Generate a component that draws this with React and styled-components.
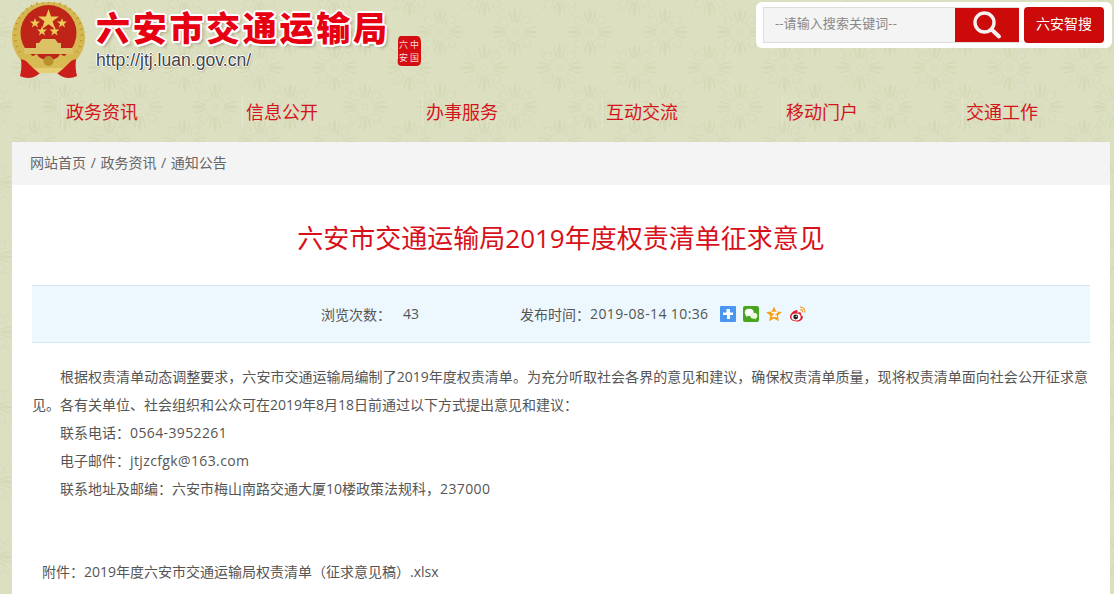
import React from "react";
import styled, { createGlobalStyle } from "styled-components";

const petals = (cx, cy, long, fill) =>
  [0, 90, 180, 270]
    .map(
      (a) =>
        `<g transform="translate(${cx} ${cy}) rotate(${a})"><path d="M0 -${long} C2.4 -${long - 5} 2.4 -${long - 10} 0 -${long - 14} C-2.4 -${long - 10} -2.4 -${long - 5} 0 -${long}Z" fill="${fill}"/><path d="M-5 -${long - 3} C-5.5 -${long - 8} -4 -${long - 11} -1.5 -${long - 14}M5 -${long - 3} C5.5 -${long - 8} 4 -${long - 11} 1.5 -${long - 14}" stroke="${fill}" stroke-width="1.5" fill="none"/></g>`
    )
    .join("");
const rings = (cx, cy, stroke) =>
  `<circle cx="${cx}" cy="${cy}" r="3" fill="none" stroke="${stroke}"/><circle cx="${cx}" cy="${cy}" r="10" fill="none" stroke="${stroke}"/>` +
  [45, 135, 225, 315]
    .map(
      (a) =>
        `<g transform="translate(${cx} ${cy}) rotate(${a})"><path d="M0 -10 C-6 -14 -6 -20 0 -20 C5 -20 5 -14 1 -14M0 -20L0 -27" fill="none" stroke="${stroke}"/></g>`
    )
    .join("");
const motif = (cx, cy) => petals(cx, cy, 24, "#d5d9b6") + rings(cx, cy, "#d6dabb");
const tile = `<svg xmlns="http://www.w3.org/2000/svg" width="75" height="75">${motif(37.5, 37.5)}${[
  [-7, 2],
  [68, 2],
  [-7, 77],
  [68, 77],
]
  .map(([x, y]) => motif(x, y))
  .join("")}</svg>`;
const tileUrl = `url("data:image/svg+xml,${encodeURIComponent(tile)}")`;

const Global = createGlobalStyle`
  html, body { margin: 0; padding: 0; height: 100%; overflow: hidden; }
  body { font-family: "Open Sans", "Noto Sans CJK SC", sans-serif; color: #555; }
`;

const Page = styled.div`
  height: 594px;
  overflow: hidden;
  background-color: #dcdfc0;
  background-image: ${tileUrl};
  background-position: 72px 30px;
`;
const Header = styled.header`
  height: 97px;
  display: flex;
  align-items: flex-start;
  justify-content: space-between;
  padding: 2px 2px 0 12px;
  box-sizing: border-box;
`;
const Brand = styled.div`
  display: flex;
  align-items: flex-start;
`;
const BrandText = styled.div`
  margin-left: 10px;
  width: 291px;
`;
const SiteName = styled.h1`
  margin: 4px 0 0;
  font-family: "Noto Sans CJK SC", sans-serif;
  font-size: 34px;
  line-height: 42px;
  letter-spacing: 2.7px;
  font-weight: 900;
  color: #e60012;
  white-space: nowrap;
  text-shadow: 2px 0 0 #fff, -2px 0 0 #fff, 0 2px 0 #fff, 0 -2px 0 #fff,
    1.5px 1.5px 0 #fff, -1.5px 1.5px 0 #fff, 1.5px -1.5px 0 #fff,
    -1.5px -1.5px 0 #fff, 3px 3px 3px rgba(0, 0, 0, 0.25);
`;
const SiteUrl = styled.div`
  margin-top: 2px;
  font-family: "Liberation Sans", sans-serif;
  font-size: 17.6px;
  line-height: 20px;
  color: #444;
  text-shadow: 1px 0 0 #fff, -1px 0 0 #fff, 0 1px 0 #fff, 0 -1px 0 #fff,
    1px 1px 2px rgba(0, 0, 0, 0.3);
`;
const Seal = styled.svg`
  display: block;
  margin: 33px 0 0 10px;
`;
const SearchCard = styled.div`
  display: flex;
  align-items: center;
  gap: 5px;
  width: 356px;
  height: 46px;
  padding: 5px 8px 5px 7px;
  box-sizing: border-box;
  background: #fff;
  border-radius: 6px;
`;
const SearchBox = styled.div`
  display: flex;
  width: 256px;
  height: 36px;
  box-sizing: border-box;
  border: 1px solid #ddd;
  background: #f4f4f4;
`;
const SearchHint = styled.div`
  flex: 1;
  padding-left: 11px;
  font-size: 13px;
  letter-spacing: 0.1px;
  line-height: 31px;
  color: #888;
  white-space: nowrap;
`;
const SearchButton = styled.div`
  width: 64px;
  margin: 0 -1px 0 0;
  background: #cc0a0a;
  display: flex;
  align-items: center;
  justify-content: center;
`;
const SmartButton = styled.div`
  width: 80px;
  height: 36px;
  border-radius: 4px;
  background: #cc0a0a;
  color: #fff;
  font-size: 14px;
  line-height: 33px;
  text-align: center;
`;
const Nav = styled.nav`
  height: 45px;
  display: flex;
  padding-left: 62px;
`;
const NavItem = styled.a`
  flex: 0 0 180px;
  height: 30px;
  box-sizing: border-box;
  border-left: 1px solid #e4e6ce;
  padding-left: 3px;
  font-size: 18px;
  line-height: 30px;
  color: #d4141c;
`;
const Panel = styled.main`
  margin-left: 12px;
  width: 1098px;
  background: #fff;
  height: 452px;
`;
const Crumb = styled.div`
  height: 43px;
  background: #f4f4f4;
  padding-left: 18px;
  font-size: 14px;
  word-spacing: 1px;
  line-height: 41px;
  color: #666;
`;
const Article = styled.article`
  padding: 0 20px;
`;
const Title = styled.h2`
  margin: 0;
  height: 100px;
  padding-top: 34px;
  box-sizing: border-box;
  text-align: center;
  font-size: 26px;
  line-height: 38px;
  font-weight: 400;
  color: #d8101a;
`;
const Meta = styled.div`
  height: 58px;
  box-sizing: border-box;
  border-top: 1px solid #d5e7ee;
  border-bottom: 1px solid #d5e7ee;
  background: #ecf8fe;
  display: flex;
  align-items: center;
  padding: 0 0 1px 289px;
  font-size: 14px;
  color: #555;
`;
const MetaLabel = styled.span`
  width: ${(p) => p.$w}px;
  flex: none;
`;
const Latin = styled.span`
  letter-spacing: 0.38px;
`;
const ShareIcons = styled.div`
  display: flex;
  align-items: center;
  gap: 7px;
  margin-left: 12px;
`;
const Body = styled.div`
  padding: 20px 2px 0 0;
  font-size: 14px;
  line-height: 28px;
  color: #555;
`;
const Para = styled.p`
  margin: 0;
  text-indent: 28px;
  text-align: justify;
`;
const Attach = styled.p`
  margin: 55px 0 0 10px;
`;

const Wreath = () => (
  <g fill="none" stroke="#a88528" strokeWidth=".8">
    {Array.from({ length: 25 }, (_, i) => {
      const a = ((i - 12) * 10 * Math.PI) / 180;
      const x = 36.5 + Math.sin(a) * 32;
      const y = 33 - Math.cos(a) * 32;
      return <path key={i} d={`M${x} ${y}l${Math.sin(a) * 3} ${-Math.cos(a) * 3}`} />;
    })}
  </g>
);

const Emblem = () => (
  <svg width="74" height="78" viewBox="0 0 74 78">
    <path d="M36.5 0C58 0 73 16 73 36C73 48 66 56 62 61H11C7 56 0 48 0 36C0 16 15 0 36.5 0Z" fill="#d6b850" />
    <Wreath />
    <path d="M9 57C10 64 9 70 8 74C14 77 22 77 28 71L45 71C51 77 59 77 65 74C64 70 63 64 64 57L50 62H23Z" fill="#cc1f1c" />
    <circle cx="36.5" cy="31" r="28" fill="#bf2419" />
    <path d="M36.5 7L39 14.6H47L40.6 19.3L43 27L36.5 22.3L30 27L32.4 19.3L26 14.6H34Z" fill="#eccb5a" />
    <path d="M22 14L23.2 17.6H27L24 19.9L25.1 23.5L22 21.3L18.9 23.5L20 19.9L17 17.6H20.8Z" fill="#eccb5a" transform="translate(1 2)" />
    <path d="M50 14L51.2 17.6H55L52 19.9L53.1 23.5L50 21.3L46.9 23.5L48 19.9L45 17.6H48.8Z" fill="#eccb5a" transform="translate(0 2)" />
    <path d="M30 24L31.2 27.6H35L32 29.9L33.1 33.5L30 31.3L26.9 33.5L28 29.9L25 27.6H28.8Z" fill="#eccb5a" />
    <path d="M42.5 24L43.7 27.6H47.5L44.5 29.9L45.6 33.5L42.5 31.3L39.4 33.5L40.5 29.9L37.5 27.6H41.3Z" fill="#eccb5a" />
    <path d="M27 41L30 37H43L46 41ZM24 41H49V46H24ZM12 46H61V52H12Z" fill="#dcc267" />
    <path d="M25 52C28 60 45 60 48 52L60 58L52 66H21L13 58Z" fill="#d8bb55" />
    <path d="M21 66H52L46 71H27Z" fill="#e6cf72" />
    <circle cx="36.5" cy="59" r="5" fill="#b8912e" />
  </svg>
);

const Magnifier = () => (
  <svg width="30" height="30" viewBox="0 0 30 30">
    <circle cx="12.5" cy="12.5" r="9.5" fill="none" stroke="#f7f0f0" strokeWidth="3.4" />
    <path d="M19.5 19.5L27 26.5" stroke="#f7f0f0" strokeWidth="4" strokeLinecap="round" />
  </svg>
);

const IconPlus = () => (
  <svg width="16" height="16" viewBox="0 0 16 16">
    <rect width="16" height="16" rx="1" fill="#4b96ee" />
    <path d="M6.5 3H10V6.5H13V9H10V13H7V9H3V6.5H6.5Z" fill="#fff" />
  </svg>
);
const IconWechat = () => (
  <svg width="16" height="16" viewBox="0 0 16 16">
    <rect width="16" height="16" rx="2" fill="#4aa51e" />
    <ellipse cx="6.2" cy="6.4" rx="4.4" ry="3.6" fill="#fff" />
    <path d="M3.6 8.6L3 11L5.6 9.6Z" fill="#fff" />
    <ellipse cx="10.8" cy="9.8" rx="3.6" ry="3" fill="#eaf6df" />
    <path d="M12.4 12L13.4 13.6L11 12.6Z" fill="#eaf6df" />
  </svg>
);
const IconStar = () => (
  <svg width="16" height="16" viewBox="0 0 16 16">
    <path d="M8 .5L10.3 5.4L15.8 6.1L11.8 9.8L12.9 15.3L8 12.6L3.1 15.3L4.2 9.8L.2 6.1L5.7 5.4Z" fill="#f5a31d" />
    <path d="M5.5 6.5H10.5L7 10.2H11" fill="none" stroke="#fff" strokeWidth="1.5" />
  </svg>
);
const IconWeibo = () => (
  <svg width="18" height="16" viewBox="0 0 17 16">
    <path d="M7 4C3.5 5 .5 8 .5 10.8C.5 13.6 3.6 15.5 7.3 15.5C10.8 15.5 13.4 13.4 13.4 11.2C13.4 9.8 12.2 9.2 11.4 9C11.9 7.8 11.8 6.9 11 6.5C10 6 8.5 6.5 7.6 7C8.2 5.2 8.2 3.6 7 4Z" fill="#df2029" />
    <ellipse cx="6.6" cy="11" rx="4.6" ry="3.4" fill="#fff" />
    <circle cx="6.2" cy="11" r="2.4" fill="#222" />
    <circle cx="6.8" cy="10.4" r=".7" fill="#fff" />
    <path d="M10.5 1.2C13.5.8 16 3.4 15.4 6.6M10.8 3.6C12.4 3.4 13.4 4.7 13.1 6.2" fill="none" stroke="#f2a02c" strokeWidth="1.2" />
  </svg>
);

const navs = ["政务资讯", "信息公开", "办事服务", "互动交流", "移动门户", "交通工作"];

export default function App() {
  return (
    <Page>
      <Global />
      <Header>
        <Brand>
          <Emblem />
          <BrandText>
            <SiteName>六安市交通运输局</SiteName>
            <SiteUrl>http://jtj.luan.gov.cn/</SiteUrl>
          </BrandText>
          <Seal width="24" height="32" viewBox="0 0 24 32">
            <path d="M4 1H20C23 1 24 4 24 8V24C24 29 23 31 19 31H5C1 31 0 28 1 24V6C1 3 2 1 4 1Z" fill="#d40d12" />
            <text x="2" y="13" fontSize="9" fill="#f8d8d8" fontFamily="Noto Sans CJK SC">六</text>
            <text x="13" y="13" fontSize="9" fill="#f8d8d8" fontFamily="Noto Sans CJK SC">中</text>
            <text x="2" y="26" fontSize="9" fill="#f8d8d8" fontFamily="Noto Sans CJK SC">安</text>
            <text x="13" y="26" fontSize="9" fill="#f8d8d8" fontFamily="Noto Sans CJK SC">国</text>
          </Seal>
        </Brand>
        <SearchCard>
          <SearchBox>
            <SearchHint>--请输入搜索关键词--</SearchHint>
            <SearchButton>
              <Magnifier />
            </SearchButton>
          </SearchBox>
          <SmartButton>六安智搜</SmartButton>
        </SearchCard>
      </Header>
      <Nav>
        {navs.map((n) => (
          <NavItem key={n}>{n}</NavItem>
        ))}
      </Nav>
      <Panel>
        <Crumb>网站首页 / 政务资讯 / 通知公告</Crumb>
        <Article>
          <Title>六安市交通运输局2019年度权责清单征求意见</Title>
          <Meta>
            <MetaLabel $w={82}>浏览次数：</MetaLabel>
            <MetaLabel $w={117}>43</MetaLabel>
            <MetaLabel $w={70}>发布时间：</MetaLabel>
            <Latin>2019-08-14 10:36</Latin>
            <ShareIcons>
              <IconPlus />
              <IconWechat />
              <IconStar />
              <IconWeibo />
            </ShareIcons>
          </Meta>
          <Body>
            <Para>
              根据权责清单动态调整要求，六安市交通运输局编制了2019年度权责清单。为充分听取社会各界的意见和建议，确保权责清单质量，现将权责清单面向社会公开征求意见。各有关单位、社会组织和公众可在2019年8月18日前通过以下方式提出意见和建议：
            </Para>
            <Para>联系电话：<Latin>0564-3952261</Latin></Para>
            <Para>电子邮件：<Latin>jtjzcfgk@163.com</Latin></Para>
            <Para>联系地址及邮编：六安市梅山南路交通大厦10楼政策法规科，<Latin>237000</Latin></Para>
            <Attach>附件：2019年度六安市交通运输局权责清单（征求意见稿）.xlsx</Attach>
          </Body>
        </Article>
      </Panel>
    </Page>
  );
}
